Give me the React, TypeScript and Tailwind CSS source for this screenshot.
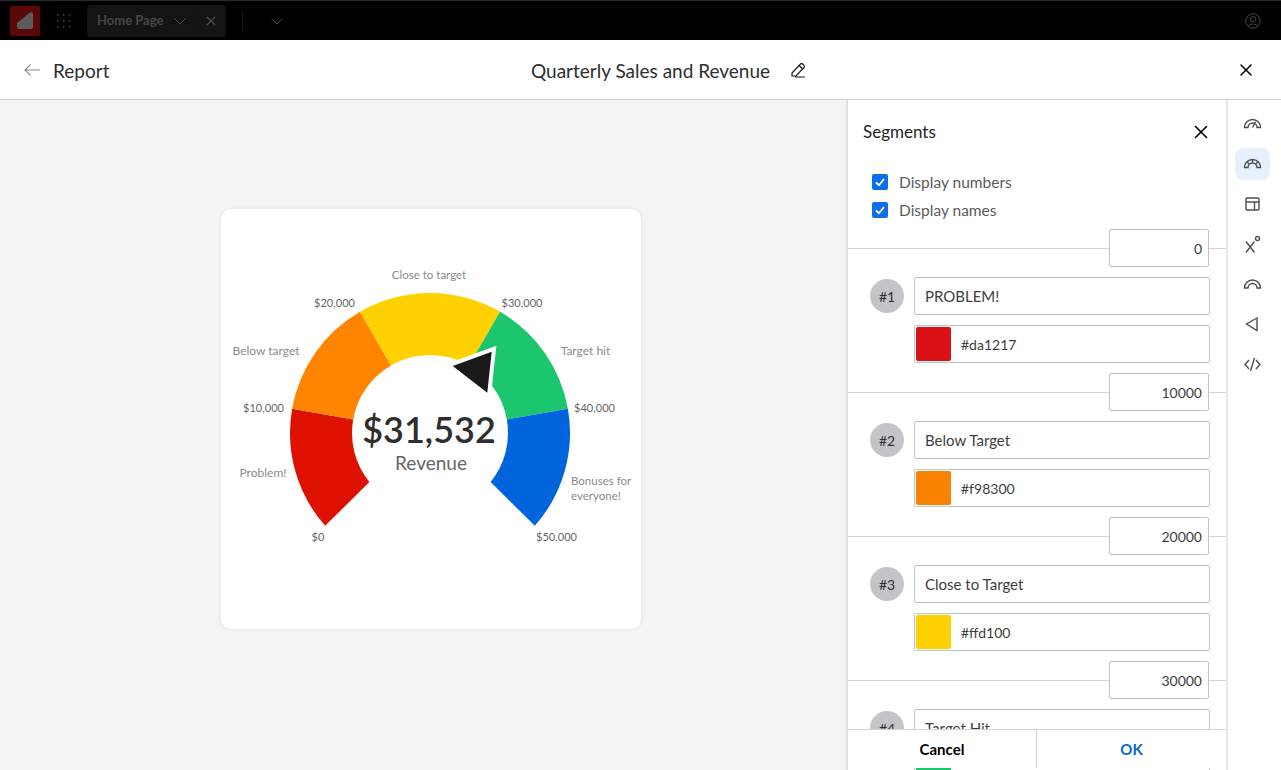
import { X } from 'lucide-react'

const font = "font-['Lato','Noto_Sans',sans-serif]"

const segments = [
  { n: '#1', name: 'PROBLEM!', hex: '#da1217', end: '10000' },
  { n: '#2', name: 'Below Target', hex: '#f98300', end: '20000' },
  { n: '#3', name: 'Close to Target', hex: '#ffd100', end: '30000' },
  { n: '#4', name: 'Target Hit', hex: '#1cc66f', end: '40000' },
]

const arcs = [
  { from: -41.5, to: 10, color: '#de1000' },
  { from: 10, to: 60, color: '#ff8400' },
  { from: 60, to: 120, color: '#ffd100' },
  { from: 120, to: 170, color: '#1cc66f' },
  { from: 170, to: 221.5, color: '#0064dc' },
]

// angle 0 points left, going clockwise over the top
function pt(deg: number, r: number) {
  const a = (deg * Math.PI) / 180
  return `${(430 - r * Math.cos(a)).toFixed(2)} ${(433 - r * Math.sin(a)).toFixed(2)}`
}

function arcPath(from: number, to: number) {
  const R = 140
  const r = 78
  // the two open ends are cut slightly slanted
  const innerFrom = Math.max(from, -39)
  const innerTo = Math.min(to, 219)
  return `M${pt(from, R)} A${R} ${R} 0 0 1 ${pt(to, R)} L${pt(innerTo, r)} A${r} ${r} 0 0 0 ${pt(innerFrom, r)} Z`
}

const labels = [
  { x: 429, y: 279, t: 'Close to target', c: '#8b8b8b', a: 'middle', s: 11.5 },
  { x: 334.5, y: 307, t: '$20,000', c: '#666666', a: 'middle', s: 11 },
  { x: 522, y: 307, t: '$30,000', c: '#666666', a: 'middle', s: 11 },
  { x: 266, y: 355, t: 'Below target', c: '#8b8b8b', a: 'middle', s: 12 },
  { x: 585.5, y: 355, t: 'Target hit', c: '#8b8b8b', a: 'middle', s: 12 },
  { x: 263.5, y: 412, t: '$10,000', c: '#666666', a: 'middle', s: 11 },
  { x: 594.5, y: 412, t: '$40,000', c: '#666666', a: 'middle', s: 11 },
  { x: 263, y: 477, t: 'Problem!', c: '#8b8b8b', a: 'middle', s: 12 },
  { x: 571, y: 485, t: 'Bonuses for', c: '#8b8b8b', a: 'start', s: 11.5 },
  { x: 571, y: 500, t: 'everyone!', c: '#8b8b8b', a: 'start', s: 11.5 },
  { x: 318, y: 541, t: '$0', c: '#666666', a: 'middle', s: 11 },
  { x: 556.5, y: 541, t: '$50,000', c: '#666666', a: 'middle', s: 11 },
]

function Gauge() {
  return (
    <svg viewBox="221 209 420 420" className="w-[420px] h-[420px] block">
      {arcs.map((s) => (
        <path key={s.from} d={arcPath(s.from, s.to)} fill={s.color} />
      ))}
      <polygon
        points="452.7,366 491.7,351.7 487.3,392.7"
        fill="#1a1a1a"
        stroke="#ffffff"
        strokeWidth="8"
        strokeLinejoin="miter"
        strokeMiterlimit="6"
        paintOrder="stroke"
      />
      {labels.map((l) => (
        <text key={l.t} x={l.x} y={l.y} fill={l.c} fontSize={l.s} textAnchor={l.a as 'middle' | 'start'}>
          {l.t}
        </text>
      ))}
      <text x="429" y="443" fill="#2e2e2e" fontSize="36" fontWeight="600" textAnchor="middle">
        $31,532
      </text>
      <text x="431" y="470" fill="#666666" fontSize="19" textAnchor="middle">
        Revenue
      </text>
    </svg>
  )
}

function TopBar() {
  return (
    <div className="h-10 bg-black border-t border-[#2a2a2a] flex items-center shrink-0">
      <div className="ml-[10px] w-[30px] h-[30px] rounded-[2px] bg-[#5c0808] flex items-center justify-center">
        <svg viewBox="0 0 30 30" className="w-[30px] h-[30px]">
          <path d="M7 17 L20 6.5 Q23 5.5 23 8 V21 Q23 23 21 23 H9 Q7 23 7 21 Z" fill="#5c5c5c" />
        </svg>
      </div>
      <svg viewBox="0 0 16 16" className="ml-4 w-4 h-4" fill="#4a4a4a">
        {[1, 7, 13].map((y) =>
          [1, 7, 13].map((x) => <rect key={`${x}-${y}`} x={x} y={y} width="1.5" height="1.5" />)
        )}
      </svg>
      <div className="ml-[15px] w-[139px] h-8 rounded bg-[#141414] flex items-center pl-[10px]">
        <span className="text-[13px] font-bold text-[#474747] w-[67px]">Home Page</span>
        <svg viewBox="0 0 14 14" className="ml-[9px] w-[14px] h-[14px]" fill="none" stroke="#474747" strokeWidth="1">
          <path d="M1.5 4.5 L7 10 L12.5 4.5" />
        </svg>
        <div className="ml-[9px] w-px h-8 bg-[#191919]" />
        <X className="ml-[6px] w-4 h-4 text-[#4d4d4d]" strokeWidth={1.75} />
      </div>
      <div className="ml-4 w-px h-5 bg-[#191919]" />
      <svg viewBox="0 0 14 14" className="ml-[27px] w-[14px] h-[14px]" fill="none" stroke="#474747" strokeWidth="1">
        <path d="M1.5 4.5 L7 10 L12.5 4.5" />
      </svg>
      <svg viewBox="0 0 16 16" className="ml-auto mr-5 w-4 h-4" fill="none" stroke="#474747" strokeWidth="1">
        <circle cx="8" cy="8" r="7.2" />
        <circle cx="8" cy="6.2" r="2.7" />
        <path d="M3.4 13 C4.5 10.4 11.5 10.4 12.6 13" />
      </svg>
    </div>
  )
}

function Header() {
  return (
    <div className="h-[60px] bg-white border-b border-[#cfcfcf] flex items-center relative shrink-0">
      <svg viewBox="0 0 18 14" className="ml-6 w-[17px] h-[14px]" fill="none" stroke="#8a8a8a" strokeWidth="1.2">
        <path d="M17 7 H1 M7 1 L1 7 L7 13" />
      </svg>
      <span className="ml-[12px] mt-1 w-[56px] text-[19px] text-[#2e2e2e]">Report</span>
      <div className="ml-[422px] flex items-center">
        <span className="mt-1 w-[240px] whitespace-nowrap text-[19px] text-[#2e2e2e]">Quarterly Sales and Revenue</span>
        <svg viewBox="0 0 16 16" className="ml-[19px] w-4 h-4" fill="none" stroke="#1a1a1a" strokeWidth="1.2">
          <path d="M2 11 L10.5 2 Q11.5 1 12.7 2 L14 3.3 Q15 4.4 14 5.5 L6 14 H2 Z M9.2 3.5 L12.6 7 M5 15 H15" />
        </svg>
      </div>
      <X className="ml-auto mr-[25px] w-5 h-5 text-black" strokeWidth={1.75} />
    </div>
  )
}

function Field({ children }: { children: React.ReactNode }) {
  return (
    <div className="h-[38px] w-[296px] border border-[#c4c4c4] rounded-[2px] bg-white flex items-center text-[15px] text-[#3d3d3d]">
      {children}
    </div>
  )
}

function Stop({ value }: { value: string }) {
  return (
    <div className="flex items-center h-[38px]">
      <div className="flex-1 h-px bg-[#d4d4d4]" />
      <div className="w-[100px] h-[38px] border border-[#c4c4c4] rounded-[2px] bg-white flex items-center justify-end pr-[6px] text-[14px] text-[#3d3d3d]">
        {value}
      </div>
      <div className="w-[17px] h-px bg-[#d4d4d4]" />
    </div>
  )
}

function Check({ label }: { label: string }) {
  return (
    <div className="h-7 flex items-center pl-6">
      <div className="w-4 h-4 rounded-[2px] bg-[#0a6fe8] flex items-center justify-center">
        <svg viewBox="0 0 12 12" className="w-3 h-3" fill="none" stroke="#ffffff" strokeWidth="1.8">
          <path d="M2 6.5 L5 9.2 L10 3" />
        </svg>
      </div>
      <span className="ml-[11px] mt-[2px] text-[15.5px] text-[#5c5c5c]">{label}</span>
    </div>
  )
}

function Panel() {
  return (
    <div className="w-[380px] shrink-0 border-l-2 border-[#e2e2e2] bg-white relative overflow-hidden">
      <div className="h-[60px] flex items-center pl-[15px] pr-[14px] pt-[4px]">
        <span className="text-[17px] text-[#1f1f1f]">Segments</span>
        <X className="ml-auto w-[22px] h-[22px] text-black" strokeWidth={1.75} />
      </div>
      <div className="pt-2">
        <Check label="Display numbers" />
        <Check label="Display names" />
      </div>
      <div className="mt-[5px]">
        <Stop value="0" />
        {segments.map((s) => (
          <div key={s.n}>
            <div className="pt-[10px] pb-[10px] flex">
              <div className="ml-[22px] mt-[2px] w-[34px] h-[34px] rounded-full bg-[#c4c4c8] flex items-center justify-center text-[14px] text-[#2e2e2e]">
                {s.n}
              </div>
              <div className="ml-[10px] flex flex-col gap-[10px]">
                <Field>
                  <span className="pl-[10px]">{s.name}</span>
                </Field>
                <Field>
                  <div className="ml-[1px] w-[35px] h-[34px] rounded-[2px]" style={{ backgroundColor: s.hex }} />
                  <span className="ml-[10px] text-[14px]">{s.hex}</span>
                </Field>
              </div>
            </div>
            <Stop value={s.end} />
          </div>
        ))}
      </div>
      <div className="absolute left-0 right-0 bottom-[2px] h-[39px] bg-white border-t border-[#d4d4d4] flex text-[15px] font-bold">
        <div className="w-[189px] border-r border-[#d4d4d4] flex items-center justify-center text-black">Cancel</div>
        <div className="flex-1 flex items-center justify-center text-[#0a66d0]">OK</div>
      </div>
    </div>
  )
}

const rail = [
  <g key="a"><path d="M1.5 12.5 A8 8 0 0 1 17.5 12.5 L14 12.5 A4.5 4.5 0 0 0 5 12.5 Z" /><path d="M9.5 12.5 L12.5 6.5" /></g>,
  <g key="b"><path d="M1.5 12.5 A8 8 0 0 1 17.5 12.5 L14 12.5 A4.5 4.5 0 0 0 5 12.5 Z" /><path d="M4 7 L6.5 9 M9.5 4.5 V8 M15 7 L12.5 9" /></g>,
  <g key="c"><rect x="3" y="3" width="13" height="12" rx="1" /><path d="M3 7 H16 M11.5 7 V15" /></g>,
  <g key="d"><path d="M3 6.5 L11.5 17.5 M11.5 6.5 L3 17.5" /><circle cx="14.5" cy="3.5" r="2" /></g>,
  <g key="e"><path d="M1.5 13 A8 8 0 0 1 17.5 13 L14 13 A4.5 4.5 0 0 0 5 13 Z" /></g>,
  <g key="f"><path d="M14 3 L3.5 9 L14 15.5 Z" /></g>,
  <g key="g"><path d="M6 5 L2 9.5 L6 14 M13 5 L17 9.5 L13 14 M11.5 3 L7.5 16" /></g>,
]

function Rail() {
  return (
    <div className="flex-1 border-l-2 border-[#e8e8e8] bg-white flex flex-col items-center pt-2 pr-[5px] gap-2">
      {rail.map((icon, i) => (
        <div
          key={i}
          className={`w-[35px] h-8 rounded-lg flex items-center justify-center ${i === 1 ? 'bg-[#e6effc]' : ''}`}
        >
          <svg viewBox="0 0 19 19" className="w-[19px] h-[19px]" fill="none" stroke="#4f4f4f" strokeWidth="1.4">
            {icon}
          </svg>
        </div>
      ))}
    </div>
  )
}

export default function App() {
  return (
    <div className={`w-[1281px] h-[770px] overflow-hidden flex flex-col bg-white ${font}`}>
      <TopBar />
      <Header />
      <div className="flex-1 flex min-h-0">
        <div className="w-[846px] shrink-0 bg-[#f4f4f4] pl-[221px] pt-[109px]">
          <div className="w-[420px] h-[420px] bg-white rounded-[10px] shadow-[0_0_4px_rgba(0,0,0,0.08)]">
            <Gauge />
          </div>
        </div>
        <Panel />
        <Rail />
      </div>
    </div>
  )
}
